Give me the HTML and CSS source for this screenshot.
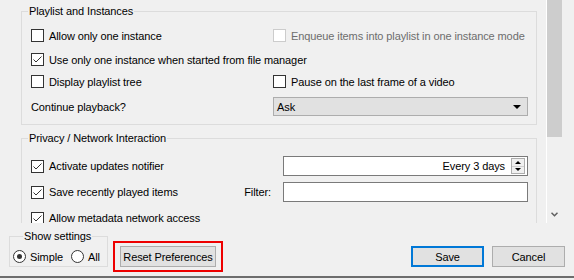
FILE: index.html
```html
<!DOCTYPE html>
<html>
  <head>
    <title>Preferences</title>
    <link rel="stylesheet" href="styles.css">
  </head>
  <body>
    <div class="main">
      <div class="view">
        <fieldset class="group playlist">
          <legend>Playlist and Instances</legend>
          <div class="rows">
            <label class="check"><span class="box"></span>Allow only one instance</label>
            <label class="check off"><span class="box"></span>Enqueue items into playlist in one instance mode</label>
            <label class="check span"><span class="box on"><svg width="11" height="11" viewBox="0 0 11 11"><polyline points="1.5,5.5 4,8 9.5,2.5"/></svg></span>Use only one instance when started from file manager</label>
            <label class="check"><span class="box"></span>Display playlist tree</label>
            <label class="check"><span class="box"></span>Pause on the last frame of a video</label>
            <span class="text">Continue playback?</span>
            <div class="combo"><span>Ask</span><span class="arrow"></span></div>
          </div>
        </fieldset>

        <fieldset class="group privacy">
          <legend>Privacy / Network Interaction</legend>
          <div class="rows">
            <label class="check"><span class="box on"><svg width="11" height="11" viewBox="0 0 11 11"><polyline points="1.5,5.5 4,8 9.5,2.5"/></svg></span>Activate updates notifier</label>
            <span></span>
            <div class="spin">
              <span>Every 3 days</span>
              <div class="spin-btns"><span class="up"></span><span class="down"></span></div>
            </div>
            <label class="check"><span class="box on"><svg width="11" height="11" viewBox="0 0 11 11"><polyline points="1.5,5.5 4,8 9.5,2.5"/></svg></span>Save recently played items</label>
            <span class="text">Filter:</span>
            <div class="field"></div>
            <label class="check"><span class="box on"><svg width="11" height="11" viewBox="0 0 11 11"><polyline points="1.5,5.5 4,8 9.5,2.5"/></svg></span>Allow metadata network access</label>
          </div>
        </fieldset>
      </div>

      <div class="scrollbar">
        <div class="thumb"></div>
        <div class="down-arrow">
          <svg width="7" height="5" viewBox="0 0 7 5"><polyline points="0.5,0.8 3.5,3.8 6.5,0.8"/></svg>
        </div>
      </div>
    </div>

    <div class="bottom">
      <fieldset class="group show">
        <legend>Show settings</legend>
        <div class="radios">
          <label class="radio"><span class="dot on"></span>Simple</label>
          <label class="radio"><span class="dot"></span>All</label>
        </div>
      </fieldset>
      <div class="mark">
        <button class="btn reset">Reset Preferences</button>
      </div>
      <button class="btn save">Save</button>
      <button class="btn cancel">Cancel</button>
    </div>
  </body>
</html>
```

FILE: styles.css
```css
body {
  margin: 0;
  width: 574px;
  height: 280px;
  overflow: hidden;
  background: #f0f0f0;
  font-family: "Liberation Sans", Arial, sans-serif;
  font-size: 11px;
  letter-spacing: -0.1px;
  color: #000;
}

.main {
  display: flex;
  height: 223px;
}

.view {
  width: 546px;
  height: 223px;
  overflow: hidden;
}

/* group boxes */

.group {
  margin: 0;
  padding: 0;
  min-width: 0;
  border: 1px solid #dcdcdc;
}

.group legend {
  margin-left: 6px;
  padding: 0 1px;
  line-height: 13px;
}

.playlist {
  margin: 5px 9px 0 21px;
}

.playlist .rows {
  display: grid;
  grid-template-columns: 242px 255px;
  grid-template-rows: 23px 25px 19px 31px;
  align-items: center;
  padding: 6px 8px 2px 9px;
}

.privacy {
  margin: 7px 9px 0 21px;
}

.privacy .rows {
  display: grid;
  grid-template-columns: minmax(0, 1fr) auto 245px;
  grid-template-rows: 26px 26px 26px;
  column-gap: 12px;
  align-items: center;
  padding: 8px 8px 10px 9px;
}

.span {
  grid-column: 1 / -1;
}

/* checkboxes */

.check {
  display: flex;
  align-items: center;
  white-space: nowrap;
}

.box {
  width: 11px;
  height: 11px;
  margin-right: 5px;
  border: 1px solid #333;
  background: #fff;
  flex: none;
}

.box svg {
  display: block;
  fill: none;
  stroke: #333;
  stroke-width: 1;
}

.off {
  color: #6d6d6d;
}

.off .box {
  border-color: #cccccc;
}

/* inputs */

.combo {
  display: flex;
  align-items: center;
  justify-content: space-between;
  height: 17px;
  padding: 0 6px 0 3px;
  border: 1px solid #adadad;
  background: #e1e1e1;
}

.arrow {
  width: 0;
  height: 0;
  border-left: 4px solid transparent;
  border-right: 4px solid transparent;
  border-top: 4px solid #000;
}

.spin {
  display: flex;
  align-items: center;
  justify-content: flex-end;
  height: 18px;
  padding-right: 2px;
  border: 1px solid #7a7a7a;
  background: #fff;
}

.spin-btns {
  display: flex;
  flex-direction: column;
  width: 12px;
  height: 14px;
  margin-left: 6px;
  border: 1px solid #adadad;
  background: #f0f0f0;
}

.spin-btns span {
  flex: 1;
  display: flex;
  align-items: center;
  justify-content: center;
}

.spin-btns .up {
  border-bottom: 1px solid #d0d0d0;
}

.spin-btns .up::after,
.spin-btns .down::after {
  content: "";
  border-left: 3px solid transparent;
  border-right: 3px solid transparent;
}

.spin-btns .up::after {
  border-bottom: 3px solid #000;
}

.spin-btns .down::after {
  border-top: 3px solid #000;
}

.field {
  height: 18px;
  border: 1px solid #7a7a7a;
  background: #fff;
}

/* scrollbar */

.scrollbar {
  display: flex;
  flex-direction: column;
  justify-content: space-between;
  width: 16px;
  border-left: 1px solid #fff;
  background: #f0f0f0;
}

.thumb {
  width: 15px;
  height: 137px;
  background: #cdcdcd;
}

.down-arrow {
  display: flex;
  align-items: center;
  justify-content: center;
  height: 17px;
  padding-right: 1px;
}

.down-arrow svg {
  fill: none;
  stroke: #606060;
  stroke-width: 1.5;
}

/* bottom bar */

.bottom {
  display: flex;
  align-items: flex-end;
  height: 55px;
  box-sizing: border-box;
  padding: 0 9px 9px 9px;
  border-bottom: 2px solid #6d6d6d;
}

.show {
  width: 99px;
  box-sizing: border-box;
}

.show legend {
  margin-left: 13px;
}

.radios {
  display: flex;
  align-items: center;
  padding: 7px 0 3px 3px;
}

.radio {
  display: flex;
  align-items: center;
  margin-right: 8px;
}

.dot {
  display: flex;
  align-items: center;
  justify-content: center;
  width: 11px;
  height: 11px;
  margin-right: 4px;
  border: 1px solid #333;
  border-radius: 50%;
  background: #fff;
}

.dot.on::after {
  content: "";
  width: 5px;
  height: 5px;
  border-radius: 50%;
  background: #333;
}

.mark {
  margin: 0 0 -5px 5px;
  padding: 3px 5px;
  border: 2px solid #ee0000;
}

.btn {
  height: 21px;
  padding: 0;
  border: 1px solid #adadad;
  background: #e1e1e1;
  font-family: inherit;
  font-size: 11px;
  letter-spacing: inherit;
  color: #000;
}

.reset {
  display: block;
  width: 96px;
}

.save {
  width: 73px;
  margin-left: auto;
  border: 2px solid #0078d7;
}

.cancel {
  width: 73px;
  margin-left: 8px;
}
```
